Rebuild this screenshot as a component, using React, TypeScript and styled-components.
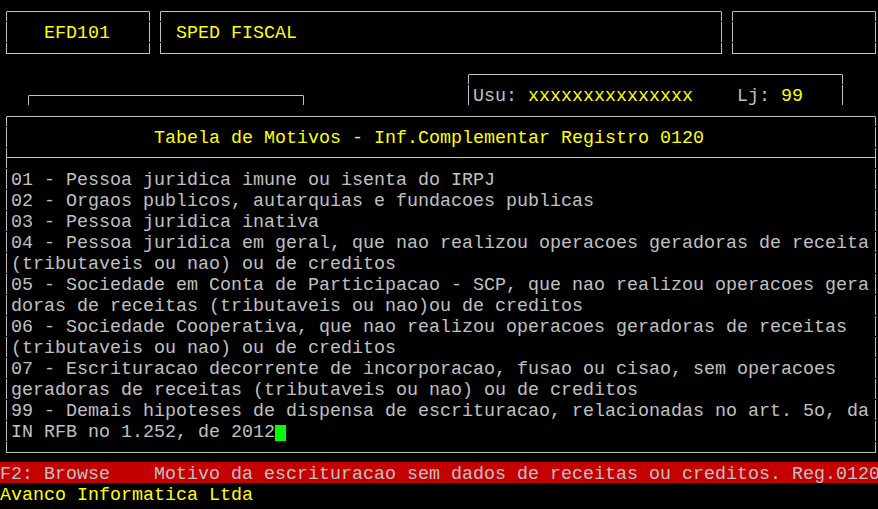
import styled, { createGlobalStyle } from 'styled-components';

const GRAY = '#c0c0c0';
const YELLOW = '#ffff00';

const GlobalStyle = createGlobalStyle`
  html, body {
    margin: 0;
    padding: 0;
    background: #000;
    overflow: hidden;
  }
`;

// terminal screen: 80 columns x 24 rows, 11x21 cells
const Screen = styled.div`
  display: grid;
  grid-template-columns: repeat(80, 11px);
  grid-template-rows: repeat(24, 21px);
  width: 880px;
  height: 509px;
  background: #000;
  font-family: 'Liberation Mono', 'Courier New', monospace;
  font-size: 18.33px;
  color: ${GRAY};
`;

// vertical box char: one glyph per row, tiny gap at each row boundary
const vbar = `repeating-linear-gradient(to bottom, ${GRAY} -10px, ${GRAY} 10px, transparent 10px, transparent 11px)`;

// box drawn with line chars: lines run through the middle of the cells
const Frame = styled.div<{ $cols: [number, number]; $rows: [number, number]; $open?: boolean }>`
  grid-column: ${(p) => p.$cols[0] + 1} / ${(p) => p.$cols[1] + 2};
  grid-row: ${(p) => p.$rows[0] + 1} / ${(p) => p.$rows[1] + 2};
  margin: 11px 4px ${(p) => (p.$open ? '0' : '9px')} 6px;
  border-top: 1px solid ${GRAY};
  border-bottom: ${(p) => (p.$open ? 'none' : `1px solid ${GRAY}`)};
  border-left: 1px solid transparent;
  border-right: 1px solid transparent;
  background:
    ${vbar} left top / 1px 100% no-repeat border-box,
    ${vbar} right top / 1px 100% no-repeat border-box;
  padding: 9px 0 0 4px;
  min-width: 0;
  min-height: 0;
`;

const Line = styled.div<{ $indent?: number; $color?: string }>`
  height: 21px;
  box-sizing: border-box;
  padding-top: 5px;
  padding-left: ${(p) => (p.$indent ?? 0) * 11}px;
  line-height: 16px;
  white-space: pre;
  color: ${(p) => p.$color ?? GRAY};
`;

const Hi = styled.span`
  color: ${YELLOW};
`;

const Divider = styled.div`
  height: 21px;
  margin-left: -4px;
  background: linear-gradient(${GRAY}, ${GRAY}) no-repeat 0 10px / 100% 1px;
`;

const Cursor = styled.span`
  display: inline-block;
  width: 11px;
  height: 16px;
  vertical-align: top;
  background: #00ff00;
`;

const StatusBar = styled.div`
  grid-column: 1 / -1;
  grid-row: 23;
  background: #c40000;
`;

const Footer = styled.div`
  grid-column: 1 / -1;
  grid-row: 24;
`;

const motivos = [
  '01 - Pessoa juridica imune ou isenta do IRPJ',
  '02 - Orgaos publicos, autarquias e fundacoes publicas',
  '03 - Pessoa juridica inativa',
  '04 - Pessoa juridica em geral, que nao realizou operacoes geradoras de receita',
  '(tributaveis ou nao) ou de creditos',
  '05 - Sociedade em Conta de Participacao - SCP, que nao realizou operacoes gera',
  'doras de receitas (tributaveis ou nao)ou de creditos',
  '06 - Sociedade Cooperativa, que nao realizou operacoes geradoras de receitas',
  '(tributaveis ou nao) ou de creditos',
  '07 - Escrituracao decorrente de incorporacao, fusao ou cisao, sem operacoes',
  'geradoras de receitas (tributaveis ou nao) ou de creditos',
  '99 - Demais hipoteses de dispensa de escrituracao, relacionadas no art. 5o, da',
];

export default function App() {
  return (
    <>
      <GlobalStyle />
      <Screen>
        <Frame $cols={[0, 13]} $rows={[0, 2]}>
          <Line $indent={3} $color={YELLOW}>EFD101</Line>
        </Frame>
        <Frame $cols={[14, 65]} $rows={[0, 2]}>
          <Line $indent={1} $color={YELLOW}>SPED FISCAL</Line>
        </Frame>
        <Frame $cols={[66, 79]} $rows={[0, 2]} />

        <Frame $cols={[42, 76]} $rows={[3, 4]} $open>
          <Line>
            Usu: <Hi>xxxxxxxxxxxxxxx</Hi>    Lj: <Hi>99</Hi>
          </Line>
        </Frame>
        <Frame $cols={[2, 27]} $rows={[4, 4]} $open />

        <Frame $cols={[0, 79]} $rows={[5, 21]}>
          <Line $indent={13} $color={YELLOW}>
            Tabela de Motivos - Inf.Complementar Registro 0120
          </Line>
          <Divider />
          {motivos.map((m, i) => (
            <Line key={i}>{m}</Line>
          ))}
          <Line>
            IN RFB no 1.252, de 2012
            <Cursor />
          </Line>
        </Frame>

        <StatusBar>
          <Line>F2: Browse    Motivo da escrituracao sem dados de receitas ou creditos. Reg.0120</Line>
        </StatusBar>
        <Footer>
          <Line $color={YELLOW}>Avanco Informatica Ltda</Line>
        </Footer>
      </Screen>
    </>
  );
}
